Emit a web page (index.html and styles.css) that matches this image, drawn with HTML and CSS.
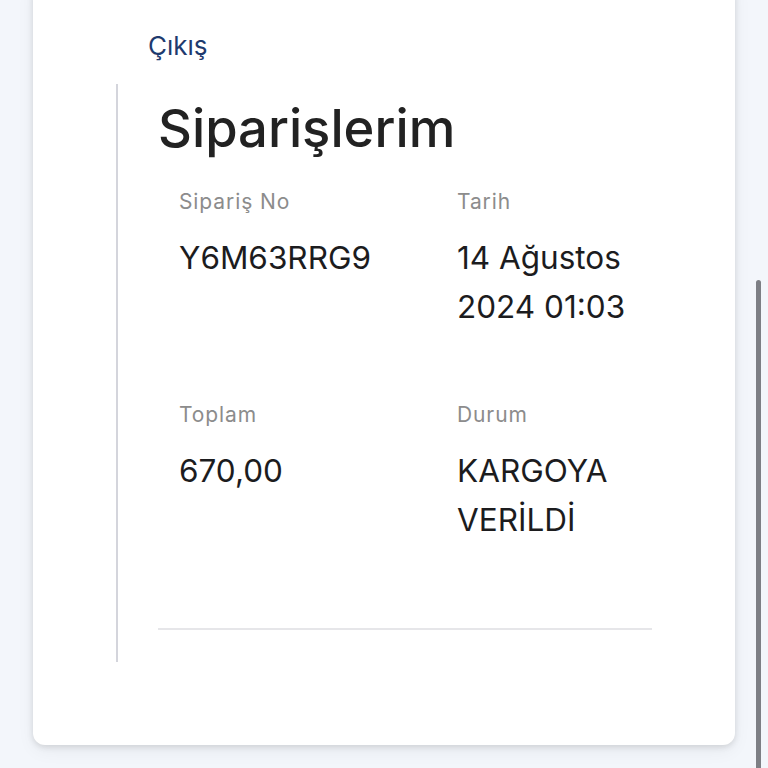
FILE: index.html
```html
<!DOCTYPE html>
<html lang="tr">
<head>
<meta charset="utf-8">
<link rel="stylesheet" href="styles.css">
</head>
<body>
<div class="page">
  <div class="card">
    <a class="logout" href="#">Çıkış</a>
    <section class="orders">
      <h1 class="title">Siparişlerim</h1>
      <div class="grid">
        <div class="field">
          <div class="label">Sipariş No</div>
          <div class="value">Y6M63RRG9</div>
        </div>
        <div class="field">
          <div class="label">Tarih</div>
          <div class="value">14 Ağustos 2024 01:03</div>
        </div>
        <div class="field">
          <div class="label">Toplam</div>
          <div class="value">670,00</div>
        </div>
        <div class="field">
          <div class="label">Durum</div>
          <div class="value">KARGOYA VERİLDİ</div>
        </div>
      </div>
      <hr class="divider">
    </section>
  </div>
</div>
<div class="scroll-thumb"></div>
</body>
</html>
```
FILE: styles.css
```css
html, body {
  margin: 0;
  padding: 0;
  background: #f3f6fb;
  height: 768px;
  overflow: hidden;
}
body {
  font-family: Inter, "Noto Sans", sans-serif;
  color: #1c1c1e;
}
.page {
  padding: 0 33px;
}
.card {
  background: #fff;
  margin-top: -20px;
  padding: 50px 83px 83px 115px;
  border-radius: 0 0 12px 12px;
  box-shadow: 0 2px 6px rgba(0,0,0,0.12), 0 6px 18px rgba(0,0,0,0.05);
}
.logout {
  display: block;
  color: #1e3a6e;
  text-decoration: none;
  font-size: 26px;
  line-height: 32px;
  height: 32px;
}
.orders {
  margin-left: -32px;
  margin-top: 22px;
  border-left: 2px solid #d4d5dc;
  padding-left: 40px;
  padding-bottom: 32px;
}
.title {
  margin: 0;
  font-size: 52.5px;
  font-weight: 500;
  line-height: 62px;
  padding-top: 13px;
  color: #222;
  letter-spacing: 0;
}
.grid {
  display: grid;
  grid-template-columns: 278px 1fr;
  padding-left: 21px;
  padding-top: 30px;
  row-gap: 71px;
}
.label {
  font-size: 21px;
  line-height: 26px;
  color: #8c8c8c;
  letter-spacing: 0.9px;
}
.value {
  margin-top: 18px;
  font-size: 31.5px;
  line-height: 49px;
  color: #1c1c1e;
  max-width: 190px;
}
.divider {
  margin: 84px 0 0 0;
  border: 0;
  border-top: 2px solid #e6e6e9;
}
.scroll-thumb {
  position: absolute;
  right: 7px;
  top: 280px;
  width: 5px;
  height: 500px;
  border-radius: 3px;
  background: #7d7f85;
}
```
